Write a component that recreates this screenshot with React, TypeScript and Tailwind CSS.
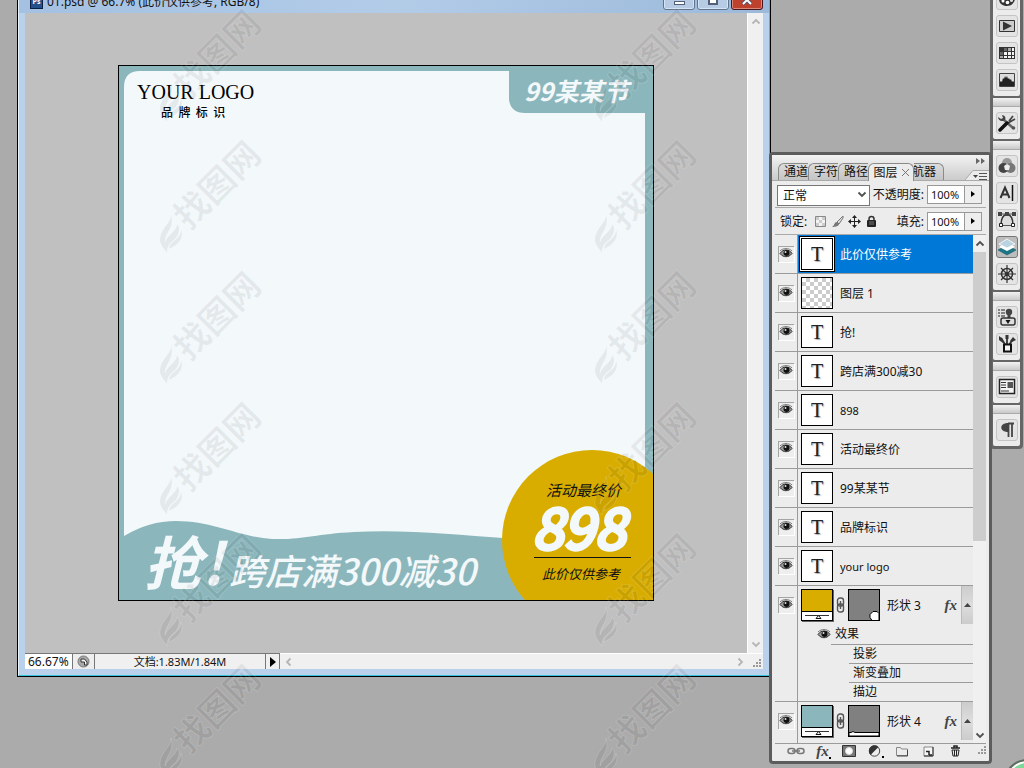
import { ReactNode } from "react";
import clsx from "clsx";

type Layer = {
  name: string;
  kind: "text" | "bitmap";
  selected?: boolean;
  latin?: boolean;
};

const layers: Layer[] = [
  { name: "此价仅供参考", kind: "text", selected: true },
  { name: "图层 1", kind: "bitmap" },
  { name: "抢!", kind: "text" },
  { name: "跨店满300减30", kind: "text" },
  { name: "898", kind: "text", latin: true },
  { name: "活动最终价", kind: "text" },
  { name: "99某某节", kind: "text" },
  { name: "品牌标识", kind: "text" },
  { name: "your logo", kind: "text", latin: true },
];

const effects = ["投影", "渐变叠加", "描边"];

const EyeIcon = () => (
  <svg width="14" height="12" viewBox="0 0 14 12">
    <path d="M1 6.500C3 3.500 5 3 7 3s4.500.8 6 3.500c-2 2.500-4 3.200-6 3.200S3 9 1 6.500Z" fill="#999" stroke="#333" />
    <path d="M1 4C4 .8 10 .8 13 4" fill="none" stroke="#777" />
    <circle cx="7.500" cy="6" r="3" fill="#111" />
    <circle cx="6.500" cy="5" r="1" fill="#ddd" />
  </svg>
);

const EyeToggle = ({ label }: { label: string }) => (
  <button
    aria-label={`显示 ${label}`}
    className="flex h-4 w-4 items-start justify-center border-t border-l border-t-[#a5a5a5] border-l-[#a5a5a5] bg-[#eee] shadow-[1px_1px_0_#fff]"
  >
    <EyeIcon />
  </button>
);

const Chevron = ({ dir, dark }: { dir: "up" | "down" | "left" | "right"; dark?: boolean }) => {
  const paths = {
    up: "M1.500 6.500 5 3l3.500 3.500",
    down: "M1.500 3.500 5 7l3.500-3.500",
    left: "M6.500 1.500 3 5l3.500 3.500",
    right: "M3.500 1.500 7 5 3.500 8.500",
  };
  return (
    <svg width="10" height="10" viewBox="0 0 10 10" fill="none" stroke={dark ? "#505050" : "#b5b5b5"} strokeWidth="1.800">
      <path d={paths[dir]} />
    </svg>
  );
};

const Grip = () => (
  <svg width="10" height="10" viewBox="0 0 10 10" fill="#999">
    {[[8, 0], [8, 3], [8, 6], [5, 3], [5, 6], [2, 6]].map(([x, y]) => (
      <rect key={`${x}-${y}`} x={x} y={y} width="2" height="2" />
    ))}
  </svg>
);

const FxIcon = () => (
  <span className="font-['Liberation_Serif',serif] text-[15px] leading-4 font-bold text-[#444] italic">fx</span>
);

/* ---------- document window ---------- */

const Artboard = () => (
  <div className="relative h-[536px] w-[536px] shrink-0 overflow-hidden border border-black bg-[#8bb7bc] font-['Noto_Sans_CJK_SC',sans-serif] whitespace-pre">
    <svg className="absolute inset-0" width="534" height="534" viewBox="0 0 534 534">
      <path
        d="M5 21Q5 5 21 5H390V34Q392 47 406 47H526V472H384C340 469 285 463 235 466C195 468 185 474 153 473C120 471 95 455 57 455Q30 455 5 470Z"
        fill="#f3f8fb"
      />
      <circle cx="473" cy="474" r="90" fill="#d8ad00" />
      <path d="M415 491.500H512" stroke="#111" />
    </svg>
    <p className="absolute top-3 left-[18px] font-['Liberation_Serif',serif] text-[20px] leading-7 text-black">YOUR LOGO</p>
    <p className="absolute top-9 left-[42px] text-[12px] leading-5 font-medium text-black">{"品  牌  标  识"}</p>
    <p className="absolute top-2 left-[405px] text-[25px] leading-8 font-bold text-[#f3f8fb] italic">99某某节</p>
    <p className="absolute top-[464px] left-[25px] text-[58px] leading-[60px] font-bold text-[#f3f8fb] italic">抢!</p>
    <p className="absolute top-[481px] left-[110px] text-[36px] leading-[44px] font-medium text-[#f3f8fb] italic">跨店满300减30</p>
    <p className="absolute top-[414px] left-[427px] text-[15px] leading-5 text-[#111] italic">活动最终价</p>
    <p className="absolute top-[429px] left-[413px] text-[56px] leading-[60px] text-[#f3f8fb] italic [-webkit-text-stroke:4px_#f3f8fb]">898</p>
    <p className="absolute top-[498px] left-[423px] text-[13px] leading-5 text-[#111] italic">此价仅供参考</p>
  </div>
);

const DocumentWindow = () => (
  <section className="absolute -top-[12px] right-[253px] bottom-[91px] left-[17px] border border-black">
    <div className="flex h-full flex-col border border-t-0 border-[#36c3dc] border-l-[#e8f2fb] bg-[#b9d1ea] px-1.5 pb-1.5">
      <header className="-mx-1.5 flex h-6 shrink-0 items-end bg-linear-to-r from-[#a4c1e2] via-[#b2cce8] to-[#9cb9da] pr-1.5 pl-[11px]">
        <div className="mb-[4px] flex h-[13px] w-[13px] items-center justify-center border border-[#0b2144] bg-[#24508c] text-[7px] font-bold text-white">
          Ps
        </div>
        <h1 className="mb-px ml-1 flex-1 truncate text-[12px] leading-5 text-[#111]">01.psd @ 66.7% (此价仅供参考, RGB/8)</h1>
        <div className="mb-[3px] flex gap-[2px]">
          <button aria-label="最小化" className="flex h-5 w-8 items-end justify-center rounded-b-[3px] border border-[#61748f] bg-[#b7cbe4] pb-1 shadow-[inset_0_0_0_1px_#d5e4f4]">
            <span className="h-1 w-[11px] border border-[#52607a] bg-white" />
          </button>
          <button aria-label="最大化" className="flex h-5 w-8 items-end justify-center rounded-b-[3px] border border-[#61748f] bg-[#b7cbe4] pb-1 shadow-[inset_0_0_0_1px_#d5e4f4]">
            <span className="h-[9px] w-[10px] border-2 border-[#52607a] bg-white" />
          </button>
          <button aria-label="关闭" className="flex h-5 w-8 items-end justify-center rounded-b-[3px] border border-[#4a1622] bg-[#bd412c] pb-1 shadow-[inset_0_0_0_1px_#d98975]">
            <svg width="12" height="10" viewBox="0 0 12 10" fill="none">
              <path d="M2 1l8 8M10 1 2 9" stroke="#54546c" strokeWidth="4" />
              <path d="M2 1l8 8M10 1 2 9" stroke="#fff" strokeWidth="2" />
            </svg>
          </button>
        </div>
      </header>

      <div className="flex min-h-0 flex-1">
        <div className="flex flex-1 items-center justify-center overflow-hidden bg-[#c0c0c0]">
          <Artboard />
        </div>
        <div className="flex w-4 flex-col items-center justify-between border-l border-white bg-[#f0f0f0] py-1">
          <button aria-label="向上滚动"><Chevron dir="up" /></button>
          <button aria-label="向下滚动"><Chevron dir="down" /></button>
        </div>
      </div>

      <footer className="flex h-4 shrink-0 items-stretch bg-[#f0f0f0] text-[11px] leading-4 text-[#111]">
        <input
          aria-label="缩放"
          defaultValue="66.67%"
          className="w-12 border-t border-r border-[#777] bg-white pl-[3px] text-[12px]"
        />
        <button aria-label="版本" className="flex w-[22px] items-center justify-center border-t border-r border-[#777] bg-[#eee]">
          <svg width="13" height="13" viewBox="0 0 13 13">
            <circle cx="6.500" cy="6.500" r="5.500" fill="#aaa" stroke="#777" />
            <path d="M4 4h3.500L10 7v3H7.500V7H4Z" fill="#f5f5f5" stroke="#333" />
          </svg>
        </button>
        <p className="w-[171px] border-t border-r border-[#777] text-center">文档:1.83M/1.84M</p>
        <button aria-label="状态选项" className="flex w-[14px] items-center justify-center border-t border-r border-[#777]">
          <svg width="6" height="10" viewBox="0 0 6 10"><path d="M0 0v10l6-5Z" /></svg>
        </button>
        <div className="flex flex-1 items-center justify-between border-t border-white pr-1 pl-1">
          <button aria-label="向左滚动"><Chevron dir="left" /></button>
          <button aria-label="向右滚动"><Chevron dir="right" /></button>
        </div>
        <div className="flex w-[14px] items-end justify-center border-t border-white"><Grip /></div>
      </footer>
    </div>
  </section>
);

/* ---------- layers panel ---------- */

const Percent = ({ label, id }: { label: string; id: string }) => (
  <div className="ml-auto flex items-center">
    <label htmlFor={id} className="mr-[3px] pt-[2px] text-[12px]">{label}</label>
    <input id={id} defaultValue="100%" className="h-[19px] w-[38px] border border-[#999] bg-white pl-[3px] text-[11px]" />
    <button aria-label={`${label}滑块`} className="flex h-[19px] w-[17px] items-center justify-center border border-l-0 border-[#999] bg-[#eee]">
      <svg width="4" height="6" viewBox="0 0 4 6"><path d="M0 0v6l4-3Z" /></svg>
    </button>
  </div>
);

const Thumb = ({ kind, selected }: Pick<Layer, "kind" | "selected">) => (
  <div
    className={clsx(
      "flex h-8 w-8 shrink-0 items-center justify-center border border-black bg-white",
      kind === "bitmap" && "bg-[conic-gradient(#ccc_25%,#fff_0_50%,#ccc_0_75%,#fff_0)] bg-size-[8px_8px]",
      selected && "shadow-[0_0_0_1px_#fff,0_0_0_2px_#000]"
    )}
  >
    {kind === "text" && (
      <span className="font-['Liberation_Serif',serif] text-[20px] leading-6 text-[#222] [text-shadow:1px_1px_1px_#aaa]">T</span>
    )}
  </div>
);

const LayerRow = ({ name, kind, selected, latin }: Layer) => (
  <li className="flex h-[39px] border-b border-[#9b9b9b]">
    <div className="flex w-[23px] shrink-0 items-center justify-center border-r border-[#9b9b9b] pr-px">
      <EyeToggle label={name} />
    </div>
    <div className={clsx("flex flex-1 items-center gap-[7px] pl-[3px]", selected && "bg-[#0078d7] text-white")}>
      <Thumb kind={kind} selected={selected} />
      <span className={clsx("pt-[2px]", latin ? "text-[11px]" : "text-[12px]")}>{name}</span>
    </div>
  </li>
);

type ShapeRowProps = { name: string; swatch: string; mask: ReactNode; children?: ReactNode };

const ShapeRow = ({ name, swatch, mask, children }: ShapeRowProps) => (
  <li className="flex border-b border-[#9b9b9b] last:h-[42px] last:border-b-0">
    <div className="flex w-[23px] shrink-0 justify-center border-r border-[#9b9b9b] pt-[11px] pr-px">
      <EyeToggle label={name} />
    </div>
    <div className="min-w-0 flex-1">
      <div className="flex h-[38px] items-center pl-[3px]">
        <div className="h-8 w-8 shrink-0 border border-black bg-white shadow-[1px_1px_0_#666]">
          <div className={clsx("h-[22px] border-b border-black", swatch)} />
          <svg width="30" height="8" viewBox="0 0 30 8">
            <path d="M3 3.500h24" stroke="#333" />
            <path d="M14 6.500 16.500 3.500 19 6.500Z" stroke="#111" fill="#fff" />
          </svg>
        </div>
        <svg className="mx-[3px] shrink-0" width="9" height="16" viewBox="0 0 9 16" fill="none" stroke="#555" strokeWidth="1.400">
          <rect x="1.500" y="1" width="6" height="8" rx="2.500" />
          <rect x="1.500" y="7" width="6" height="8" rx="2.500" />
          <path d="M4.500 4v8" />
        </svg>
        <svg className="shrink-0 border border-black" width="32" height="32" viewBox="0 0 30 30">
          <path d="M0 0h30v30H0Z" fill="#808080" />
          {mask}
        </svg>
        <span className="ml-[7px] flex-1 pt-[2px] text-[12px] whitespace-nowrap">{name}</span>
        <FxIcon />
        <button aria-label="展开效果" className="ml-1 flex h-[38px] w-3 items-center justify-center border-l border-[#bbb] bg-linear-to-b from-[#ccc] via-[#ddd] to-[#ccc]">
          <svg width="7" height="4" viewBox="0 0 7 4"><path d="M0 4h7L3.500 0Z" fill="#444" /></svg>
        </button>
      </div>
      {children}
    </div>
  </li>
);

const tabs = ["通道", "字符", "路径"];

const LayersPanel = () => (
  <section className="absolute top-[152px] right-8 bottom-1 flex w-[223px] flex-col rounded border-3 border-[#5c5c5c] bg-[#ececec] text-[#111]">
    <header className="flex h-[26px] shrink-0 justify-between border-b border-[#aaa] bg-linear-to-b from-[#f3f3f3] to-[#cbcbcb] pl-[6px]">
      <div className="flex items-end text-[12px] leading-4">
        {tabs.map((tab) => (
          <button key={tab} className="h-[17px] w-[30px] overflow-hidden rounded-tl-md border-t border-l border-[#8a8a8a] bg-linear-to-b from-[#dcdcdc] to-[#c4c4c4] pl-[5px] text-left whitespace-nowrap">
            {tab}
          </button>
        ))}
        <button className="-mb-px flex h-[18px] w-[46px] items-center justify-center gap-1 rounded-t-md border border-b-0 border-[#8a8a8a] bg-[#ececec] whitespace-nowrap">
          图层
          <svg width="7" height="7" viewBox="0 0 7 7" stroke="#777"><path d="m0 0 7 7M7 0 0 7" /></svg>
        </button>
        <button className="flex h-[17px] w-[30px] justify-end overflow-hidden rounded-tr-md border-t border-r border-[#8a8a8a] bg-linear-to-b from-[#dcdcdc] to-[#c4c4c4] pr-[7px] whitespace-nowrap">
          导航器
        </button>
      </div>
      <div className="flex flex-col items-end justify-between">
        <button aria-label="折叠面板" className="mt-[3px] mr-1">
          <svg width="9" height="6" viewBox="0 0 9 6" fill="#666"><path d="M0 0v6l4-3ZM5 0v6l4-3Z" /></svg>
        </button>
        <button aria-label="面板菜单">
          <svg width="24" height="10" viewBox="0 0 24 10">
            <path d="M0 10 8 1h16v9Z" fill="#ececec" />
            <path d="M0 10 8 .5h16" fill="none" stroke="#aaa" />
            <path d="M8 5h5l-2.500 3Z" fill="#444" />
            <path d="M14 3.500h8M14 6.500h8M14 9.500h8" stroke="#555" />
          </svg>
        </button>
      </div>
    </header>

    <div className="mx-[3px] flex h-[27px] shrink-0 items-center border-b border-[#aaa] pr-1 pl-[2px]">
      <div className="relative">
        <select aria-label="混合模式" className="h-[21px] w-[93px] appearance-none border border-[#777] bg-white pt-[2px] pl-[5px] text-[12px] leading-4">
          <option>正常</option>
        </select>
        <span className="pointer-events-none absolute inset-y-0 right-[3px] flex items-center"><Chevron dir="down" dark /></span>
      </div>
      <Percent label="不透明度:" id="opacity" />
    </div>

    <div className="mx-[3px] flex h-[27px] shrink-0 items-center border-b border-[#aaa] pr-1 pl-[5px]">
      <span className="mr-[7px] pt-[2px] text-[12px]">锁定:</span>
      <div className="flex items-center gap-1">
        <button aria-label="锁定透明像素">
          <svg width="13" height="13" viewBox="0 0 13 13">
            <path d="M1.500 1.500h10v10h-10Z" fill="#f3f3f3" stroke="#888" />
            <path d="M2 2h3v3H2ZM8 2h3v3H8ZM5 5h3v3H5ZM2 8h3v3H2ZM8 8h3v3H8Z" fill="#ccc" />
          </svg>
        </button>
        <button aria-label="锁定图像像素">
          <svg width="13" height="13" viewBox="0 0 13 13">
            <path d="M12 1 6 7l2 2 4-6Z" fill="#ddd" stroke="#777" />
            <path d="M6 7c-3 0-2 3-5 5 4 0 7-1 7-3Z" fill="#777" />
          </svg>
        </button>
        <button aria-label="锁定位置">
          <svg width="13" height="13" viewBox="0 0 13 13" fill="#222">
            <path d="M6 2h1v9H6ZM2 6h9v1H2ZM6.500 0 9 3H4ZM6.500 13 4 10h5ZM0 6.500 3 4v5ZM13 6.500 10 9V4Z" />
          </svg>
        </button>
        <button aria-label="锁定全部">
          <svg width="13" height="13" viewBox="0 0 13 13">
            <path d="M4 6V4a2.500 2.500 0 0 1 5 0v2" fill="none" stroke="#333" strokeWidth="1.500" />
            <rect x="2" y="5" width="9" height="7" rx="1" fill="#222" />
            <path d="M4 7h5M4 9h5" stroke="#777" />
          </svg>
        </button>
      </div>
      <Percent label="填充:" id="fill" />
    </div>

    <div className="flex min-h-0 flex-1 px-[3px]">
      <ul className="min-w-0 flex-1 overflow-hidden">
        {layers.map((layer) => (
          <LayerRow key={layer.name} {...layer} />
        ))}
        <ShapeRow name="形状 3" swatch="bg-[#d8ad00]" mask={<path d="M24 21.500h4l2 2v7h-7l-2-3v-3Z" fill="#fff" stroke="#000" />}>
          <div className="ml-[33px] text-[12px]">
            <div className="-ml-[14px] flex h-5 items-center gap-1">
              <EyeIcon />
              效果
            </div>
            <div className="border-t border-[#9b9b9b]">
              {effects.map((effect) => (
                <p key={effect} className="ml-[18px] h-[19px] border-b border-[#9b9b9b] pl-1 leading-[18px] last:h-[18px] last:border-b-0">
                  {effect}
                </p>
              ))}
            </div>
          </div>
        </ShapeRow>
        <ShapeRow
          name="形状 4"
          swatch="bg-[#8bb7bc]"
          mask={<path d="M0 26.500h2q2-2 4 0h24V30H0Z" fill="#fff" stroke="#000" />}
        />
      </ul>
      <div className="flex w-[13px] flex-col items-center bg-[#f0f0f0]">
        <button aria-label="向上滚动" className="flex h-[17px] items-center"><Chevron dir="up" dark /></button>
        <div className="h-[289px] w-full bg-[#cdcdcd]" />
        <button aria-label="向下滚动" className="mt-auto flex h-[17px] items-center"><Chevron dir="down" dark /></button>
      </div>
    </div>

    <footer className="mx-[3px] flex h-[18px] shrink-0 items-center justify-between border-t border-[#9b9b9b] pb-[3px] pl-3">
      <button aria-label="链接图层">
        <svg width="18" height="8" viewBox="0 0 18 8" fill="none" stroke="#777" strokeWidth="1.500">
          <rect x="1" y="1.500" width="7" height="5" rx="2.500" />
          <rect x="10" y="1.500" width="7" height="5" rx="2.500" />
          <path d="M5 4h8" />
        </svg>
      </button>
      <button aria-label="图层样式" className="flex items-end"><FxIcon /><span className="h-[2px] w-[2px] bg-black" /></button>
      <button aria-label="添加蒙版">
        <svg width="14" height="12" viewBox="0 0 14 12">
          <path d="M.5.500h13v11H.5Z" fill="#777" stroke="#333" />
          <circle cx="7" cy="6" r="3.500" fill="#fff" stroke="#ddd" />
        </svg>
      </button>
      <button aria-label="调整图层">
        <svg width="17" height="13" viewBox="0 0 17 13">
          <circle cx="6.500" cy="6" r="5.200" fill="#eee" stroke="#444" />
          <path d="M2.500 10a5.200 5.200 0 0 1 8-8Z" fill="#333" />
          <path d="M14 11h2v2h-2Z" />
        </svg>
      </button>
      <button aria-label="新建组">
        <svg width="12" height="11" viewBox="0 0 12 11">
          <path d="M.5 9.500v-8h4l1 1.500h6v6.500Z" fill="#ececec" stroke="#888" />
          <path d="M1 10h10.500V4" fill="none" stroke="#444" />
        </svg>
      </button>
      <button aria-label="新建图层" className="ml-1">
        <svg width="11" height="11" viewBox="0 0 11 11">
          <path d="M1 1h9v9H1Z" fill="#f7f7f7" stroke="#888" />
          <path d="M10 1v9H1" fill="none" stroke="#333" />
          <path d="M3 5.500h3V9M6 9h3" fill="none" stroke="#222" strokeWidth="1.500" />
        </svg>
      </button>
      <button aria-label="删除图层" className="mx-1">
        <svg width="11" height="12" viewBox="0 0 11 12" fill="none" stroke="#222">
          <path d="M1 3h9M4 2.500V1h3v1.500" strokeWidth="1.500" />
          <path d="M2 5h7l-1 6H3ZM4.500 5v6M6.500 5v6" />
        </svg>
      </button>
      <Grip />
    </footer>
  </section>
);

/* ---------- icon dock ---------- */

type DockItem = { label: string; icon: ReactNode; active?: boolean };

const groups: DockItem[][] = [
  [
    {
      label: "颜色",
      icon: (
        <>
          <path d="M9 1c5 0 8 3 8 7s-3 8-8 8-8-3-8-7 3-8 8-8Z" fill="#333" />
          <path d="M3 6h12v2H3Z" fill="#999" />
          <circle cx="5" cy="11" r="1.500" fill="#fff" />
          <circle cx="9.500" cy="12.500" r="1.800" fill="#fff" />
          <circle cx="13.500" cy="10.500" r="1.500" fill="#ddd" />
        </>
      ),
    },
    {
      label: "动画",
      icon: (
        <>
          <path d="M1.500 3.500h15v11h-15Z" fill="#ccc" stroke="#333" />
          <path d="M5 4.500v9l9-4.500Z" fill="#333" />
        </>
      ),
    },
    {
      label: "色板",
      icon: (
        <>
          <path d="M1 3h16v12H1Z" fill="#333" />
          <path d="M6 8h3v3H6ZM10 8h3v3h-3ZM14 8h2v3h-2ZM10 12h3v2h-3ZM14 12h2v2h-2ZM6 12h3v2H6ZM14 4h2v3h-2Z" fill="#f4f4f4" />
          <path d="M2 12h3v2H2ZM10 4h3v3h-3Z" fill="#aaa" />
          <path d="M2 8h3v3H2ZM6 4h3v3H6Z" fill="#666" />
        </>
      ),
    },
    {
      label: "直方图",
      icon: (
        <>
          <path d="M1.500 2.500h15v13h-15Z" fill="#ddd" stroke="#444" />
          <path d="M2 15v-4l1-1 1 1 1-4 1 1 1-3 1 2 1-2 1 3 1-1 1 2 1-1 1 3 1-1 1 1v4Z" fill="#222" />
        </>
      ),
    },
  ],
  [
    {
      label: "工具预设",
      icon: (
        <>
          <path d="m5 5 10 9" stroke="#666" strokeWidth="2.500" />
          <path d="M0 3c0 3 3 5 6 3.500S7 1 4 1l1 3-2 1Z" fill="#444" />
          <path d="m11 7 4-5M10 9l7-4" stroke="#444" strokeWidth="1.800" />
          <path d="M9 9 2 16" stroke="#111" strokeWidth="3.500" strokeLinecap="round" />
          <circle cx="15.500" cy="14" r="1.800" fill="#555" />
        </>
      ),
    },
  ],
  [
    {
      label: "样式",
      icon: (
        <>
          <circle cx="9" cy="6" r="5" fill="#999" />
          <circle cx="5.500" cy="11" r="5" fill="#444" />
          <circle cx="12.500" cy="11" r="5" fill="#777" />
          <path d="M9 7l3 2-1 4H7L6 9Z" fill="#eee" />
        </>
      ),
    },
    {
      label: "字符",
      icon: (
        <>
          <path d="M2.500 14 7 3.500 11.500 14M4 10.500h6" fill="none" stroke="#333" strokeWidth="2" />
          <path d="M14.500 1v16" stroke="#111" strokeWidth="1.500" />
        </>
      ),
    },
    {
      label: "路径",
      icon: (
        <>
          <path d="M3 14C3 8 5 4 9 3c4 1 6 5 6 11" fill="#ddd" stroke="#333" strokeWidth="1.500" />
          <path d="M3 3h12M3 14.500h12" stroke="#555" />
          <path d="M0 1h4v4H0ZM7 1h4v4H7ZM14 1h4v4h-4Z" fill="#444" />
          <path d="M1.500 12.500h3v3h-3ZM13.500 12.500h3v3h-3Z" fill="#fff" stroke="#222" />
        </>
      ),
    },
    {
      label: "图层",
      active: true,
      icon: (
        <>
          <path d="m9 7 9 5-9 5-9-5Z" fill="#1d7687" stroke="#0e5462" strokeWidth=".5" />
          <path d="m9 4 8 5-8 4-8-4Z" fill="#fff" />
          <path d="m9 1 8 5-8 4-8-4Z" fill="#b9d3e0" stroke="#fff" strokeWidth=".8" />
        </>
      ),
    },
    {
      label: "导航器",
      icon: (
        <>
          <circle cx="9" cy="9" r="5.500" fill="none" stroke="#333" strokeWidth="1.500" />
          <path d="M9 0v18M0 9h18M3 3l12 12M15 3 3 15" stroke="#333" strokeWidth="1.200" />
          <circle cx="9" cy="9" r="2" fill="#333" />
        </>
      ),
    },
  ],
  [
    {
      label: "仿制源",
      icon: (
        <>
          <path d="M0 2h2M0 5h2M0 8h2M3 2h4M3 5h4M3 8h4" stroke="#222" strokeWidth="1.200" />
          <circle cx="11" cy="4" r="3.200" fill="#444" />
          <path d="M9.500 6h3v4h-3Z" fill="#444" />
          <rect x="3" y="10" width="14" height="7" rx="2" fill="#ddd" stroke="#333" strokeWidth="1.500" />
          <path d="M7.500 12h5L10 16Z" fill="#111" />
        </>
      ),
    },
    {
      label: "画笔",
      icon: (
        <>
          <path d="M7.500 10 3 3M9 9V2M11 10l4-6" stroke="#333" strokeWidth="1.800" />
          <path d="M1 1l4 3v4L1 5ZM7.500 0h3v4h-3ZM12 6l3-4 3 3-4 2Z" fill="#333" />
          <path d="M6 9.500h7v7H6Z" fill="#f4f4f4" stroke="#111" strokeWidth="2" />
        </>
      ),
    },
  ],
  [
    {
      label: "图层复合",
      icon: (
        <>
          <path d="M1.500 1.500h15v14h-15Z" fill="#f4f4f4" stroke="#222" strokeWidth="1.500" />
          <path d="M3 4.500h5M3 7h5M3 9.500h5M3 13h8" stroke="#333" strokeWidth="1.200" />
          <path d="M9.500 4H15v6H9.500Z" fill="#555" />
        </>
      ),
    },
  ],
  [
    {
      label: "段落",
      icon: (
        <>
          <path d="M10 2v9C1 11 1 2 10 2Z" fill="#444" />
          <path d="M10 2.500h6M10.500 2v14M14 2v14" stroke="#444" strokeWidth="1.800" />
        </>
      ),
    },
  ],
];

const Dock = () => (
  <nav className="absolute -top-[29px] right-px flex w-[33px] flex-col gap-[2px] rounded-b border-3 border-[#666] bg-[#666]">
    {groups.map((group, i) => (
      <div key={i} className="rounded-[2px] bg-[#ececec] pb-[5px]">
        <div className="h-[9px] border-b border-[#aaa] bg-linear-to-b from-[#f2f2f2] to-[#c9c9c9]" />
        <div className="flex flex-col items-center gap-[5px] pt-[5px]">
          {group.map((item) => (
            <button
              key={item.label}
              aria-label={item.label}
              className={clsx(
                "flex h-[22px] w-[22px] items-center justify-center rounded-[3px] border",
                item.active ? "border-[#777] bg-[#bdbdbd]" : "border-[#c4c4c4] bg-[#e4e4e4]"
              )}
            >
              <svg width="18" height="18" viewBox="0 0 18 18" className="shrink-0">{item.icon}</svg>
            </button>
          ))}
        </div>
      </div>
    ))}
  </nav>
);

/* ---------- watermark ---------- */

const Watermark = () => (
  <svg width="112" height="131" viewBox="0 0 112 131" className="shrink-0 overflow-visible">
    <g fill="#000" fillOpacity=".06" stroke="#fff" strokeOpacity=".14">
      <path d="M13 79c1 8-10 14-11 24-1 7 4 10 7 15 0-9 5-11 9-15 4-6 4-11 1-14 0 7-10 11-12 18 0-10 10-14 6-28Z" />
      <path d="M11 114c0-8 12-9 12-20 3 8-1 15-12 20Z" />
      <text
        transform="translate(31 96) rotate(-45)"
        fontFamily="'Noto Sans CJK SC', sans-serif"
        fontWeight="700"
        fontSize="35"
      >
        找图网
      </text>
    </g>
  </svg>
);

const WatermarkColumn = () => (
  <div className="flex w-[112px] flex-col">
    {[0, 1, 2, 3, 4, 5].map((n) => (
      <Watermark key={n} />
    ))}
  </div>
);

const App = () => {
  return (
    <main className="relative h-screen overflow-hidden bg-[#ababab] font-['Noto_Sans','Noto_Sans_CJK_SC',sans-serif]">
      <DocumentWindow />
      <div aria-hidden="true" className="pointer-events-none absolute top-1 left-[158px] flex gap-[323px]">
        <WatermarkColumn />
        <WatermarkColumn />
      </div>
      <Dock />
      <LayersPanel />
      <div className="absolute -right-[26px] -bottom-[37px] h-[46px] w-[46px] rounded-full border-2 border-[#5c6b5f] bg-[#7fd79a] shadow-[inset_0_0_0_2px_#fff]" />
    </main>
  );
};

export default App;
